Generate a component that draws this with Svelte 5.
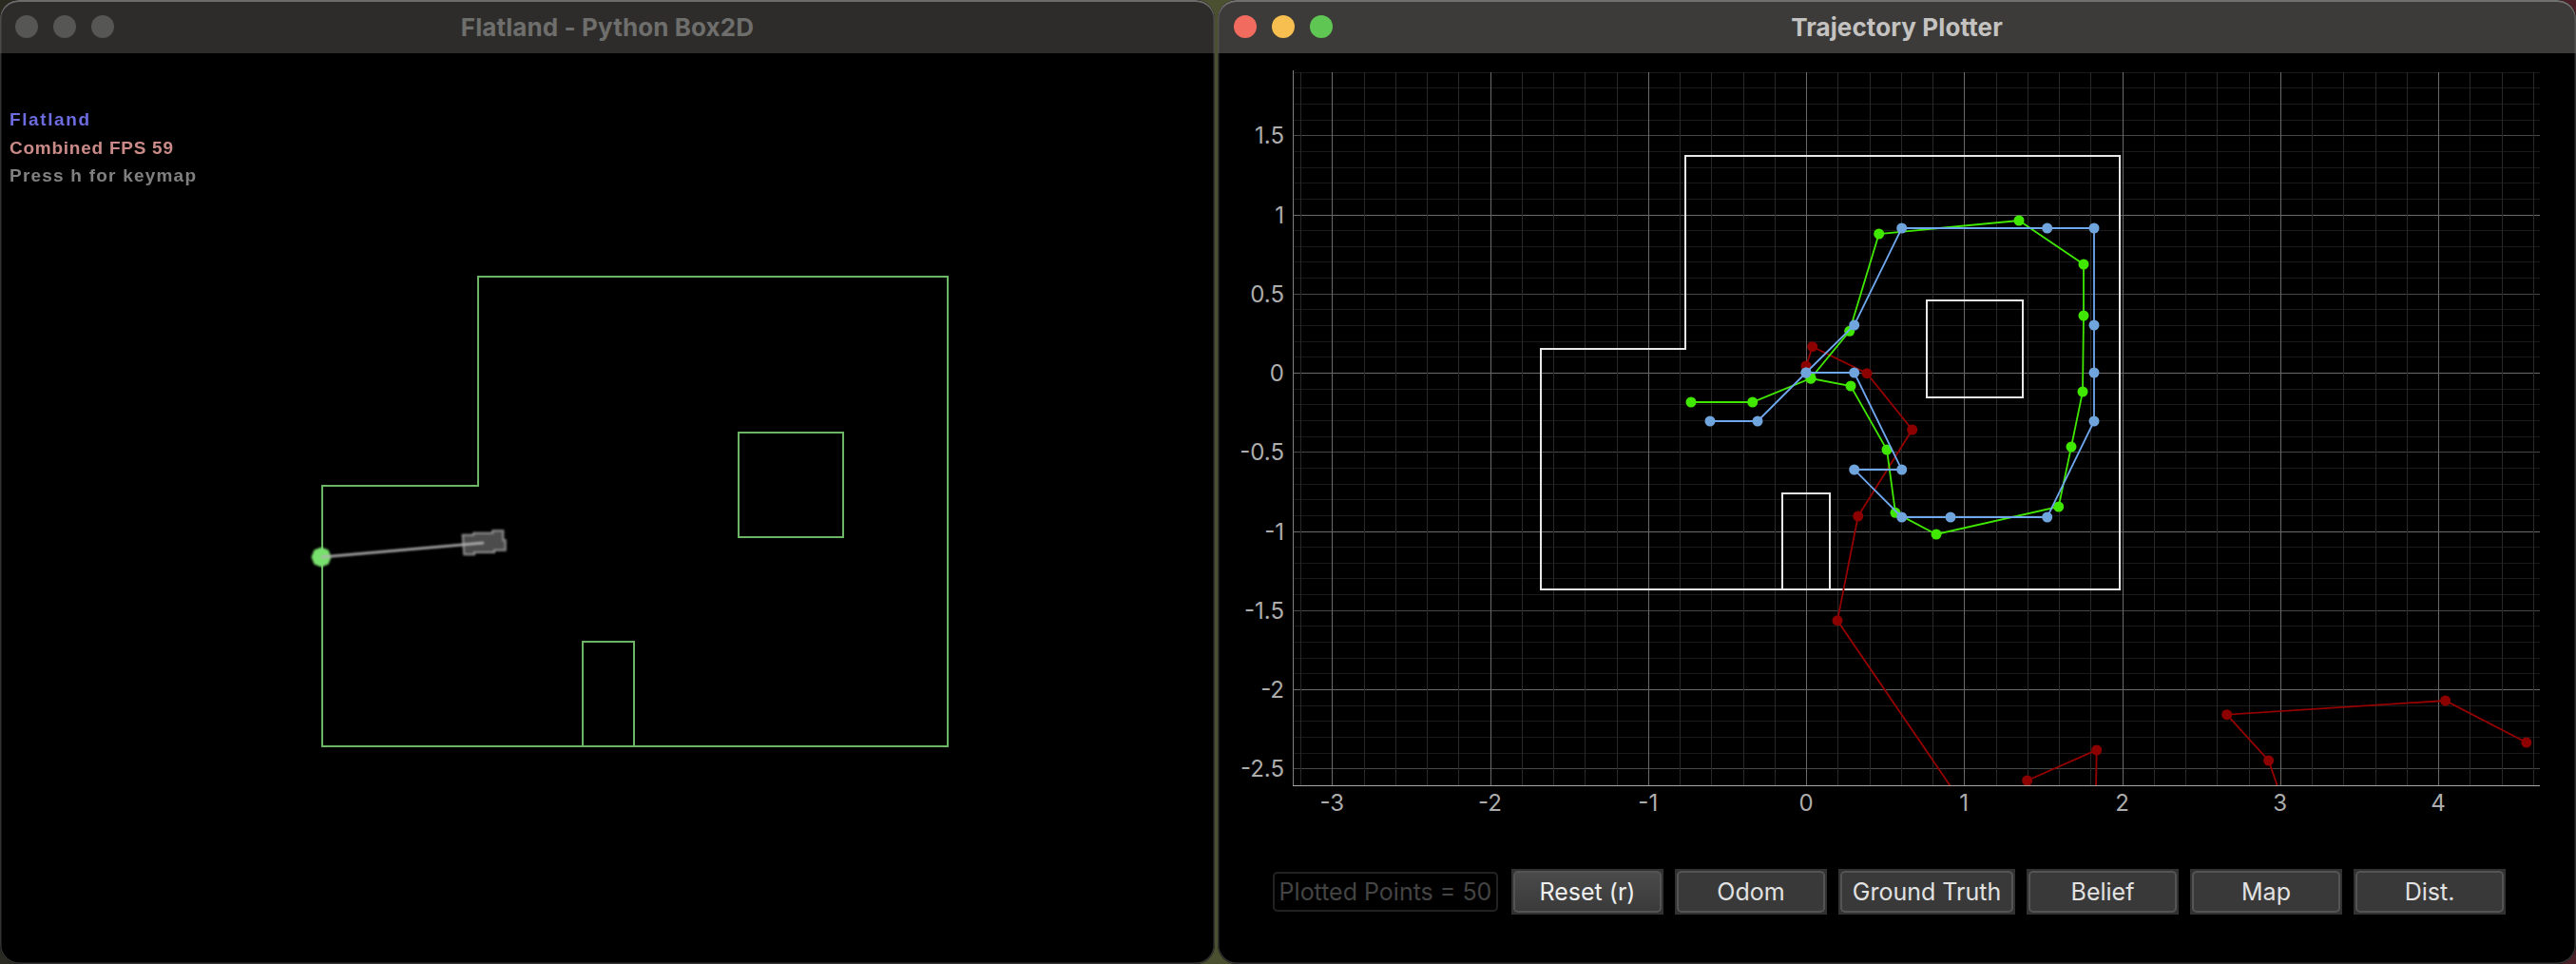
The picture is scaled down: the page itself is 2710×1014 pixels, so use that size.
<script>
  const buttons = ["Reset (r)", "Odom", "Ground Truth", "Belief", "Map", "Dist."];

  // plot scale, in window pixels per metre
  const X0 = 1900, Y0 = 392, UX = 166.25, UY = 166.5;
  const LEFT = 1361, RIGHT = 2672, TOP = 76, BOTTOM = 826;
  const px = (v) => Math.round(X0 + v * UX) + 0.5;
  const py = (v) => Math.round(Y0 - v * UY) + 0.5;

  const vLines = [];
  for (let k = -16; k <= 23; k++) vLines.push({ x: px(k * 0.2), major: k % 5 === 0 });
  const hLines = [];
  for (let k = -25; k <= 19; k++) {
    hLines.push({ y: py(k * 0.1), color: k % 10 === 0 ? "#6a6a6a" : k % 5 === 0 ? "#484848" : "#1a1a1a" });
  }

  const xTicks = [-3, -2, -1, 0, 1, 2, 3, 4];
  const yTicks = [1.5, 1, 0.5, 0, -0.5, -1, -1.5, -2, -2.5];

  const green = [[1779,423],[1843.7,423],[1905,398],[1947,406],[1985,473],[1994,539.3],[2037,562],[2165.7,533],[2179,470],[2191,412],[2192,332],[2192,278],[2124,232],[1976.7,246],[1945.7,348.3],[1905,398]];
  const blue = [[1799,443],[1849,443],[1900,392],[1950.7,342],[2000.7,240],[2153.7,240],[2203,240],[2203,342],[2203,392],[2203,443],[2153.7,544],[2052,544],[2000.7,544],[1950.7,494],[2000.7,494],[1950.7,392],[1900,392]];
  const red = [
    [[1900,385],[1906.7,364.7],[1964,392.7],[2011.7,452],[1954.7,543],[1933,652.7],[2054,830]],
    [[2132.7,821],[2205.7,789],[2205,830]],
    [[2657.8,781],[2572.6,737],[2342.7,751.7],[2386.6,800],[2397,830]],
  ];
  const pts = (list) => list.map((p) => p.join(",")).join(" ");
  const inside = (p) => p[1] < 828;
</script>

<div class="desktop">
  <section class="window sim">
    <header class="titlebar">
      <div class="lights">
        <i class="off"></i><i class="off"></i><i class="off"></i>
      </div>
      <h1>Flatland - Python Box2D</h1>
    </header>
    <svg class="canvas" viewBox="0 56 1278 958" width="1278" height="958">
      <g class="hud">
        <text x="10" y="132" fill="#6c6ce0" textLength="84">Flatland</text>
        <text x="10" y="162" fill="#c98a88" textLength="172">Combined FPS 59</text>
        <text x="10" y="191" fill="#808080" textLength="196">Press h for keymap</text>
      </g>
      <g class="world">
        <path d="M339 511H503V291H997V785H339Z M613 785V675H667V785 M777 455H887V565H777Z" />
      </g>
      <g class="robot">
        <polygon points="338,575.5 345.5,578.5 348.5,586 345.5,593.5 338,596.5 330.5,593.5 327.5,586 330.5,578.5" fill="#78e06c" />
        <polygon points="486.7,562.7 498.3,562.7 498.3,560.7 518.3,560.7 518.3,558.3 529.3,558.3 529.3,568.3 531.7,568.3 531.7,578.7 520,578.7 520,581 499,581 499,583.3 488.3,583.3" fill="#4c4c4c" stroke="#929292" stroke-width="2" />
        <line x1="338" y1="586" x2="509" y2="571" stroke="#b4b4b4" stroke-width="2.5" />
      </g>
    </svg>
  </section>

  <section class="window plotter">
    <header class="titlebar">
      <div class="lights">
        <i class="close"></i><i class="min"></i><i class="max"></i>
      </div>
      <h1>Trajectory Plotter</h1>
    </header>

    <svg class="plot" viewBox="1281 56 1429 858" width="1429" height="858">
      <defs>
        <clipPath id="plot-area">
          <rect x={LEFT} y={TOP} width={RIGHT - LEFT} height={BOTTOM - TOP} />
        </clipPath>
      </defs>

      {#each hLines as l}
        <line x1={LEFT} x2={RIGHT} y1={l.y} y2={l.y} stroke={l.color} />
      {/each}
      {#each vLines as l}
        <line x1={l.x} x2={l.x} y1={TOP} y2={BOTTOM} stroke={l.major ? "#6a6a6a" : "#292929"} />
      {/each}

      <g class="map">
        <path d="M1621 620V367H1773V164H2230V620Z M1875 620V519H1925V620 M2027 316H2128V418H2027Z" />
      </g>

      <g clip-path="url(#plot-area)">
        {#each red as seg}
          <polyline points={pts(seg)} class="trace" stroke="#960000" />
          {#each seg.filter(inside) as p}
            <circle cx={p[0]} cy={p[1]} r="5.5" fill="#8c0000" />
          {/each}
        {/each}
        <polyline points={pts(green)} class="trace" stroke="#40e800" />
        {#each green as p}
          <circle cx={p[0]} cy={p[1]} r="5.5" fill="#40e800" />
        {/each}
        <polyline points={pts(blue)} class="trace" stroke="#70a8f0" />
        {#each blue as p}
          <circle cx={p[0]} cy={p[1]} r="5.5" fill="#70a4dc" />
        {/each}
      </g>

      <line x1="1360.5" x2="1360.5" y1="74" y2="826" stroke="#808080" />
      <line x1="1360" x2={RIGHT} y1="826.5" y2="826.5" stroke="#a8a8a8" />

      {#each yTicks as t}
        <text class="tick" x="1351" y={Y0 - t * UY + 9} text-anchor="end">{t}</text>
      {/each}
      {#each xTicks as t}
        <text class="tick" x={X0 + t * UX} y="853" text-anchor="middle">{t}</text>
      {/each}
    </svg>

    <div class="controls">
      <div class="readout">Plotted Points = 50</div>
      {#each buttons as b, i}
        <button class:wide={b === "Ground Truth"} class:default={i === 0}><span>{b}</span></button>
      {/each}
    </div>
  </section>
</div>

<style>
  :global(body) {
    margin: 0;
    background: #000;
  }
  .desktop {
    display: flex;
    justify-content: space-between;
    width: 2710px;
    height: 1014px;
    overflow: hidden;
    background: linear-gradient(90deg, #2a2a20 0%, #4a5030 47%, #4c2a28 90%, #4a2026 100%);
    font-family: Inter, "Liberation Sans", sans-serif;
  }
  .window {
    position: relative;
    display: flex;
    flex-direction: column;
    height: 1014px;
    border-radius: 20px;
    overflow: hidden;
    background: #000;
  }
  .window::after {
    content: "";
    position: absolute;
    inset: 0;
    border-radius: 20px;
    box-shadow: inset 0 0 0 1.5px rgba(110, 110, 110, 0.45), inset 0 2px 0 rgba(170, 170, 170, 0.5);
    pointer-events: none;
  }
  .sim {
    width: 1278px;
  }
  .plotter {
    width: 1429px;
  }
  .titlebar {
    position: relative;
    flex: none;
    display: flex;
    align-items: center;
    justify-content: center;
    height: 56px;
    background: #2d2c2a;
  }
  .plotter .titlebar {
    background: #3c3b39;
  }
  .titlebar h1 {
    margin: 0;
    font-size: 26px;
    font-weight: 700;
    letter-spacing: 0.1px;
    color: #6e6e6c;
  }
  .plotter .titlebar h1 {
    color: #c4c3c1;
  }
  .lights {
    position: absolute;
    left: 16px;
    top: 16px;
    display: flex;
    gap: 16px;
  }
  .plotter .lights {
    left: 17px;
  }
  .lights i {
    display: block;
    width: 24px;
    height: 24px;
    border-radius: 50%;
  }
  .off {
    background: #565654;
  }
  .close {
    background: #f26b5f;
  }
  .min {
    background: #f7bf4f;
  }
  .max {
    background: #5fc653;
  }
  svg {
    display: block;
    flex: none;
  }
  .hud text {
    font-family: "Liberation Sans", sans-serif;
    font-size: 19px;
    font-weight: 700;
    filter: blur(0.6px);
  }
  .world path {
    fill: none;
    stroke: #6cb564;
    stroke-width: 2;
    filter: blur(0.3px);
  }
  .robot {
    filter: blur(0.8px);
  }
  .map path {
    fill: none;
    stroke: #e8e8e8;
    stroke-width: 2;
  }
  .trace {
    fill: none;
    stroke-width: 1.8;
  }
  .tick {
    font-family: Inter, "Liberation Sans", sans-serif;
    font-size: 24px;
    fill: #adadad;
  }
  .controls {
    display: flex;
    align-items: center;
    gap: 12px;
    height: 48px;
    padding-left: 58px;
  }
  .readout {
    box-sizing: border-box;
    width: 237px;
    height: 42px;
    margin-right: 2px;
    border: 2px solid #222;
    border-radius: 5px;
    font-size: 25px;
    line-height: 38px;
    text-align: center;
    white-space: nowrap;
    color: #444;
  }
  button {
    box-sizing: border-box;
    width: 160px;
    height: 48px;
    padding: 2px;
    border: 0;
    border-radius: 0;
    background: #323232;
    font: inherit;
  }
  button.wide {
    width: 186px;
  }
  button span {
    display: block;
    box-sizing: border-box;
    height: 44px;
    border: 2px solid #545454;
    border-radius: 5px;
    background: #393939;
    font-size: 25px;
    line-height: 40px;
    white-space: nowrap;
    color: #e2e2e2;
  }
  button.default span {
    background: linear-gradient(#4a4a4a, #3a3a3a);
    color: #efefef;
  }
</style>
